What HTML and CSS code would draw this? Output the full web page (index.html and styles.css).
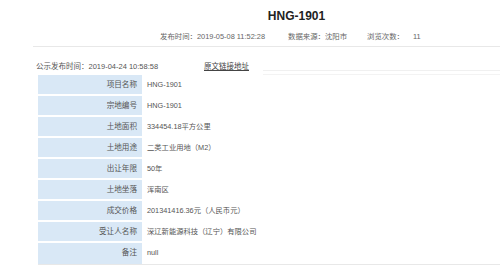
FILE: index.html
```html
<!DOCTYPE html>
<html>
<head>
<meta charset="utf-8">
<link rel="stylesheet" href="styles.css">
</head>
<body>
<div class="page">
  <h1 class="title">HNG-1901</h1>
  <div class="meta">
    <span class="meta-item">发布时间：2019-05-08 11:52:28</span>
    <span class="meta-item">数据来源：沈阳市</span>
    <span class="meta-item">浏览次数：<span class="count">11</span></span>
  </div>
  <div class="sep"></div>
  <div class="info">
    <span class="pubtime">公示发布时间：2019-04-24 10:58:58</span>
    <a class="link">原文链接地址</a>
    <span class="faint"></span>
  </div>
  <div class="table">
    <div class="row"><div class="label">项目名称</div><div class="value">HNG-1901</div></div>
    <div class="row"><div class="label">宗地编号</div><div class="value">HNG-1901</div></div>
    <div class="row"><div class="label">土地面积</div><div class="value">334454.18平方公里</div></div>
    <div class="row"><div class="label">土地用途</div><div class="value">二类工业用地（M2）</div></div>
    <div class="row"><div class="label">出让年限</div><div class="value">50年</div></div>
    <div class="row"><div class="label">土地坐落</div><div class="value">浑南区</div></div>
    <div class="row"><div class="label">成交价格</div><div class="value">201341416.36元（人民币元）</div></div>
    <div class="row"><div class="label">受让人名称</div><div class="value">深辽新能源科技（辽宁）有限公司</div></div>
    <div class="row last"><div class="label">备注</div><div class="value">null</div></div>
  </div>
</div>
</body>
</html>
```
FILE: styles.css
```css
html, body {
  margin: 0;
  padding: 0;
  background: #fff;
}
.page {
  width: 500px;
  height: 265px;
  overflow: hidden;
  font-family: "Liberation Sans", "Noto Sans CJK SC", sans-serif;
  color: #555;
  white-space: nowrap;
}
.title {
  margin: 0;
  padding-top: 7px;
  padding-left: 93px;
  height: 18px;
  line-height: 18px;
  font-family: "Liberation Sans", Arial, sans-serif;
  font-size: 12px;
  font-weight: bold;
  color: #222;
  text-align: center;
}
.meta {
  display: flex;
  padding-left: 160px;
  margin-top: 5px;
  height: 14px;
  line-height: 14px;
  font-size: 7.4px;
  color: #666;
}
.meta-item:nth-child(1) { width: 128px; }
.meta-item:nth-child(2) { width: 79px; }
.count { margin-left: 9px; }
.sep {
  margin: 2px 0 0 33px;
  border-top: 1px solid #e8e8e8;
}
.info {
  position: relative;
  display: flex;
  align-items: center;
  padding-left: 36px;
  margin-top: 11px;
  height: 14px;
  font-size: 7.5px;
  color: #555;
}
.pubtime { width: 168px; }
.link {
  color: #444;
  text-decoration: underline;
  font-size: 7.5px;
}
.faint {
  position: absolute;
  left: 263px;
  right: 0;
  top: 12px;
  height: 3px;
  border-top: 1px solid #f0f0f0;
  border-bottom: 1px solid #f3f3f3;
}
.table {
  margin: 3px 0 0 38px;
  border-bottom: 1px solid #e8e8e8;
}
.row {
  display: flex;
  height: 21px;
}
.label {
  width: 104px;
  box-sizing: border-box;
  padding-right: 5px;
  text-align: right;
  background: #d9e8f6;
  border-bottom: 2px solid #fff;
  line-height: 20px;
  font-size: 7.6px;
  color: #555;
}
.row.last .label { border-bottom: 0; }
.value {
  flex: 1;
  padding-left: 5px;
  line-height: 20px;
  font-size: 7.3px;
  color: #555;
}
```
